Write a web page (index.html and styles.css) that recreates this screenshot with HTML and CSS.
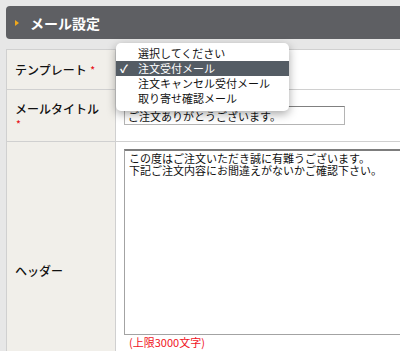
FILE: index.html
```html
<!DOCTYPE html>
<html lang="ja">
<head>
  <meta charset="UTF-8" />
  <meta name="viewport" content="width=device-width, initial-scale=1.0"/>
  <title>メール設定</title>
  <link rel="stylesheet" href="styles.css">
</head>
<body>
  <h2 class="panel-title"><span class="arrow"></span>メール設定</h2>
  <table class="form-table">
    <tr class="row-template">
      <th>テンプレート <span class="req">*</span></th>
      <td class="select-cell">
        <div class="select-box"></div>
        <ul class="popup">
          <li>選択してください</li>
          <li class="selected"><span class="check">✓</span>注文受付メール</li>
          <li>注文キャンセル受付メール</li>
          <li>取り寄せ確認メール</li>
        </ul>
      </td>
    </tr>
    <tr class="row-title">
      <th>メールタイトル <span class="req">*</span></th>
      <td><input class="text-input" type="text" value="ご注文ありがとうございます。"></td>
    </tr>
    <tr class="row-header">
      <th>ヘッダー</th>
      <td class="area-cell">
        <textarea class="text-area">この度はご注文いただき誠に有難うございます。
下記ご注文内容にお間違えがないかご確認下さい。</textarea>
        <p class="limit">(上限3000文字)</p>
      </td>
    </tr>
  </table>
</body>
</html>
```

FILE: styles.css
```css
html, body {
  overflow: hidden;
}
body {
  margin: 0;
  padding: 6px 0 0 6px;
  background: #e7e7e7;
  font-family: "Noto Sans CJK JP", sans-serif;
  color: #111;
}
.panel-title {
  margin: 0 0 10px 0;
  height: 33px;
  display: flex;
  align-items: center;
  background: #5e5f63;
  border-radius: 4px 0 0 4px;
  color: #fff;
  font-size: 14px;
  font-weight: bold;
  padding-left: 9px;
}
.arrow {
  width: 0; height: 0;
  border-top: 3px solid transparent;
  border-bottom: 3px solid transparent;
  border-left: 4px solid #f0a81c;
  margin-right: 11px;
}
.form-table {
  border-collapse: collapse;
  width: 440px;
}
.form-table th, .form-table td {
  border: 1px solid #d0d0d0;
  vertical-align: middle;
}
.form-table th {
  width: 90px;
  padding: 0 10px 0 8px;
  background: #f1efea;
  text-align: left;
  font-weight: 500;
  font-size: 12px;
  line-height: 15px;
}
.form-table td {
  background: #fff;
  padding: 0 0 0 8px;
}
.req {
  color: #e8141a;
  font-size: 10px;
  vertical-align: top;
  margin-left: 1px;
}
.row-template th { height: 39px; }
.row-title th { height: 51px; }

.select-cell {
  position: relative;
}
.select-box {
  width: 150px;
  height: 18px;
}
.popup {
  position: absolute;
  left: 0;
  top: -7px;
  width: 173px;
  margin: 0;
  padding: 3px 0 5px 0;
  list-style: none;
  background: #fff;
  border-radius: 5px;
  box-shadow: 0 3px 10px rgba(0, 0, 0, 0.35);
  z-index: 2;
  font-size: 11px;
  line-height: 15px;
}
.popup li {
  position: relative;
  padding-left: 22px;
  color: #111;
}
.popup .selected {
  background: #545c64;
  color: #fff;
}
.check {
  position: absolute;
  left: 4px;
  font-size: 11px;
  font-weight: bold;
}
.text-input {
  width: 221px;
  height: 19px;
  box-sizing: border-box;
  border: 1px solid #b4b4b4;
  border-top-color: #808080;
  padding: 0 3px;
  font-family: "Noto Sans CJK JP", sans-serif;
  font-size: 11px;
  color: #111;
  display: block;
}
.area-cell {
  padding-top: 7px !important;
  padding-bottom: 50px !important;
}
.text-area {
  display: block;
  width: 320px;
  height: 186px;
  box-sizing: border-box;
  margin: 0;
  border: 1px solid #a3a3a3;
  border-top: 2px solid #7d7d7d;
  padding: 1px 4px;
  font-family: "Noto Sans CJK JP", sans-serif;
  font-size: 11px;
  line-height: 12px;
  color: #111;
  resize: none;
}
.limit {
  margin: 0;
  padding-left: 5px;
  color: #f0141e;
  font-size: 11px;
  line-height: 14px;
}
```
